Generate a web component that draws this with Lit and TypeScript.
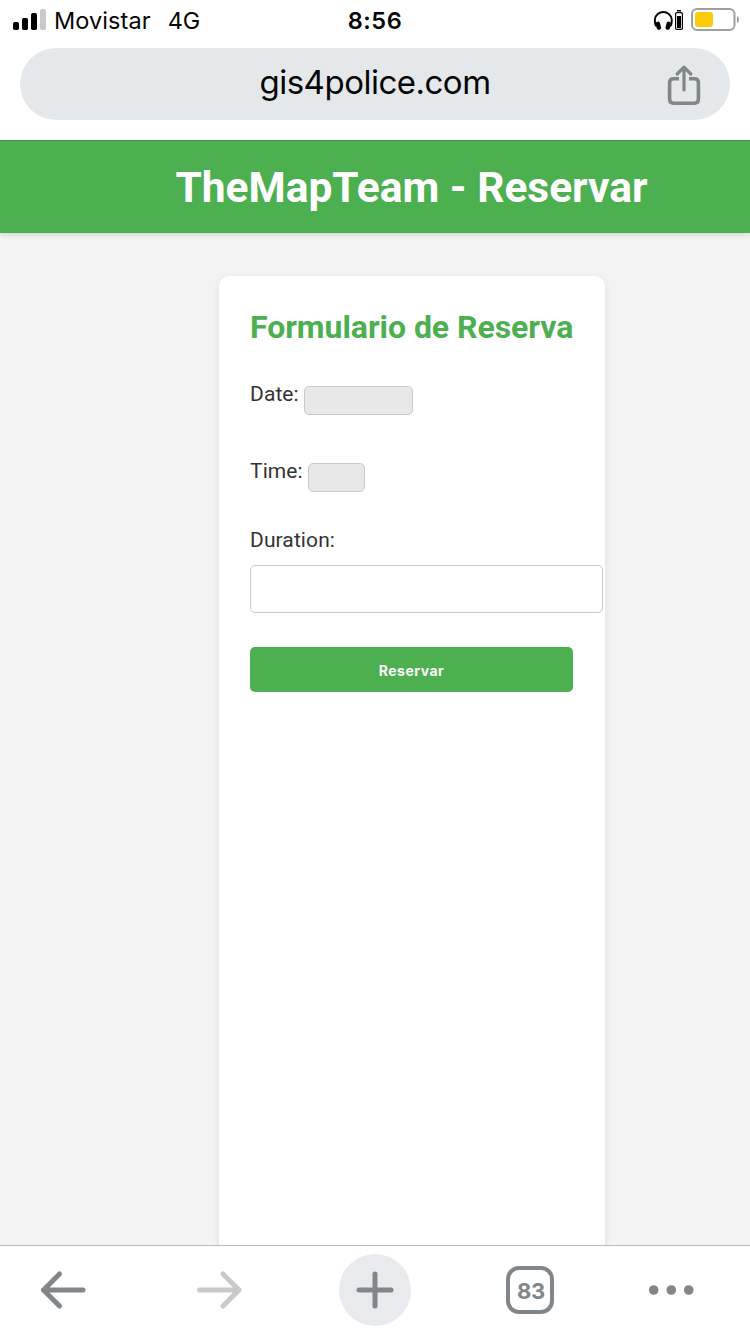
import { LitElement, html, css, svg } from "lit";
import { customElement, property } from "lit/decorators.js";

@customElement("status-bar")
class StatusBar extends LitElement {
  static styles = css`
    :host { display: grid; grid-template-columns: 1fr auto 1fr; height: 48px; box-sizing: border-box; background: #fff; color: #050505; font: 24px/42px Inter, sans-serif; }
    svg { display: block; flex: none; }
    .left { display: flex; padding-left: 12px; }
    .signal { margin-right: 8px; }
    .carrier { font-size: 23.5px; letter-spacing: 0.08px; margin-right: 17px; }
    .network { font-size: 23.5px; letter-spacing: -0.2px; }
    .time { font-weight: 600; font-size: 23.5px; letter-spacing: 0.6px; }
    .right { display: flex; justify-content: flex-end; padding-right: 11px; }
  `;
  render() {
    return html`
      <div class="left">
        <svg class="signal" width="34" height="40" viewBox="0 0 34 40">
          <rect x="1" y="22" width="6" height="8" rx="1.7" />
          <rect x="10" y="18" width="6" height="12" rx="1.7" />
          <rect x="19" y="13" width="6" height="17" rx="1.7" />
          <rect x="28" y="9" width="6" height="21" rx="1.7" fill="#c9c9c9" />
        </svg>
        <span class="carrier">Movistar</span>
        <span class="network">4G</span>
      </div>
      <span class="time">8:56</span>
      <div class="right">
        <svg width="87" height="40" viewBox="652 0 87 40">
          <path d="M656.5 26.5C654.9 24.500 654.6 22 654.9 19.200A8.500 8.500 0 0 1 671.700 19.200C672 22 671.700 24.500 670.100 26.500" fill="none" stroke="#050505" stroke-width="1.9" />
          <rect x="656.2" y="21.6" width="4.400" height="8.200" rx="2" transform="rotate(-14 658.400 25.7)" />
          <rect x="666" y="21.6" width="4.400" height="8.200" rx="2" transform="rotate(14 668.200 25.7)" />
          <rect x="675.6" y="12.6" width="6.8" height="16.8" rx="1.2" fill="#fff" stroke="#050505" stroke-width="1.2" />
          <rect x="677" y="10" width="4" height="1.5" />
          <rect x="677" y="16" width="4" height="12" />
          <rect x="692" y="9" width="42.5" height="21" rx="5" fill="#fff" stroke="#a0a0a2" stroke-width="2" />
          <rect x="695" y="12" width="18" height="15" rx="3" fill="#fecb07" />
          <path d="M737 16c2.5 1.2 2.5 5.800 0 7z" fill="#98989a" />
        </svg>
      </div>
    `;
  }
}

@customElement("address-bar")
class AddressBar extends LitElement {
  @property() address = "";
  static styles = css`
    :host { display: block; height: 92px; padding: 0 20px; box-sizing: border-box; background: #fff; }
    .pill { display: grid; grid-template-columns: 1fr auto 1fr; height: 72px; border-radius: 36px; background: #e5e8eb; color: #050505; }
    .address { grid-column: 2; font: 33px/68px Inter, sans-serif; letter-spacing: -0.5px; }
    .share { justify-self: end; display: block; margin: 16px 28px 0 0; }
  `;
  render() {
    return html`
      <div class="pill">
        <span class="address">${this.address}</span>
        <svg class="share" width="36" height="42" viewBox="666 64 36 42" fill="none" stroke="#818689" stroke-width="3.6">
          <path d="M679 78.800H673.500Q669.600 78.800 669.600 82.700V99.300Q669.600 103.200 673.500 103.200H694.500Q698.400 103.200 698.400 99.300V82.700Q698.400 78.800 694.500 78.800H689" />
          <path d="M684 90V68M677.200 74L684 67.200L690.800 74" stroke-width="3.200" stroke-linecap="round" stroke-linejoin="round" />
        </svg>
      </div>
    `;
  }
}

@customElement("booking-page")
class BookingPage extends LitElement {
  static styles = css`
    :host { display: flex; flex-direction: column; background: #f3f3f3; font-family: Roboto, sans-serif; color: #333; overflow: hidden; }
    header { flex: none; height: 93px; box-sizing: border-box; border-top: 1px solid #459149; padding-left: 73px; background: #4caf50; box-shadow: 0 2px 5px rgba(0, 0, 0, 0.11); text-align: center; }
    h1 { margin: 0; color: #fff; font-size: 42.5px; line-height: 94px; font-weight: 700; white-space: nowrap; }
    .card { flex: 1; width: 386px; box-sizing: border-box; margin: 43px 0 0 219px; padding: 31px 32px 0 31px; border-radius: 10px 10px 0 0; background: #fff; box-shadow: 0 2px 7px rgba(0, 0, 0, 0.09); }
    h2 { margin: 0 0 38px; color: #4caf50; font-size: 32px; line-height: 40px; font-weight: 700; letter-spacing: -0.05px; white-space: nowrap; }
    .row { display: flex; height: 77px; font-size: 21px; line-height: 18px; }
    .row.stacked { flex-direction: column; height: 106px; margin-top: -8px; }
    input { display: block; box-sizing: border-box; border: 1px solid #c9c9c9; border-radius: 5px; margin: 0; padding: 0; }
    .date, .time { margin: 1px 0 0 5px; height: 29px; background: #e8e8e8; }
    .date { width: 109px; }
    .time { width: 57px; }
    .duration { width: 353px; height: 48px; margin-top: 16px; background: #fff; }
    label { letter-spacing: 0.1px; }
    button { display: block; width: 100%; height: 45px; margin-top: 10px; padding: 2px 0 0; border: 0; border-radius: 5px; background: #4caf50; color: #fff; font: 700 14px Inter, sans-serif; letter-spacing: 0.5px; }
  `;
  render() {
    return html`
      <header><h1>TheMapTeam - Reservar</h1></header>
      <section class="card">
        <h2>Formulario de Reserva</h2>
        <div class="row"><label for="date">Date:</label><input class="date" id="date" /></div>
        <div class="row"><label for="time">Time:</label><input class="time" id="time" /></div>
        <div class="row stacked"><label for="duration">Duration:</label><input class="duration" id="duration" /></div>
        <button>Reservar</button>
      </section>
    `;
  }
}

@customElement("tool-bar")
class ToolBar extends LitElement {
  @property({ type: Number }) tabs = 0;
  static styles = css`
    :host { display: grid; grid-template-columns: 141px 156px 156px 156px 141px; height: 89px; box-sizing: border-box; border-top: 1px solid #bababc; padding-top: 8px; background: #fff; color: #81868a; }
    :host > * { align-self: start; }
    svg { display: block; fill: none; stroke: currentColor; stroke-width: 5; stroke-linecap: round; stroke-linejoin: round; }
    .back { margin-left: 27px; }
    .forward { margin-left: 42px; color: #c9c9c9; }
    .add { margin-left: 42px; width: 72px; height: 72px; border-radius: 50%; background: #e9eaee; }
    .tabs { display: flex; align-items: center; justify-content: center; margin: 12px 0 0 53px; width: 48px; height: 48px; box-sizing: border-box; border: 4px solid; border-radius: 13px; font: 700 22px/40px Inter, sans-serif; }
    .tabs span { padding: 1px 0 0 2px; letter-spacing: -0.3px; }
    .more { margin-left: 26px; fill: currentColor; stroke: none; }
  `;
  render() {
    return html`
      <svg class="back" width="72" height="72" viewBox="27 1254 72 72"><path d="M83 1290H43.500M59.500 1274L43.500 1290L59.500 1306" /></svg>
      <svg class="forward" width="72" height="72" viewBox="183 1254 72 72"><path d="M199.500 1290H239M223 1274L239 1290L223 1306" /></svg>
      <div class="add"><svg width="72" height="72" viewBox="339 1254 72 72"><path d="M359 1290H391M375 1274V1306" /></svg></div>
      <div class="tabs"><span>${this.tabs}</span></div>
      <svg class="more" width="72" height="72" viewBox="635 1254 72 72">
        ${[653.7, 671.3, 688.7].map((x) => svg`<circle cx=${x} cy="1290" r="4.800" />`)}
      </svg>
    `;
  }
}

@customElement("app-root")
class AppRoot extends LitElement {
  static styles = css`
    :host { display: flex; flex-direction: column; width: 750px; height: 1334px; overflow: hidden; }
    status-bar, address-bar, tool-bar { flex: none; }
    booking-page { flex: 1; min-height: 0; }
  `;
  render() {
    return html`
      <status-bar></status-bar>
      <address-bar address="gis4police.com"></address-bar>
      <booking-page></booking-page>
      <tool-bar tabs="83"></tool-bar>
    `;
  }
}
